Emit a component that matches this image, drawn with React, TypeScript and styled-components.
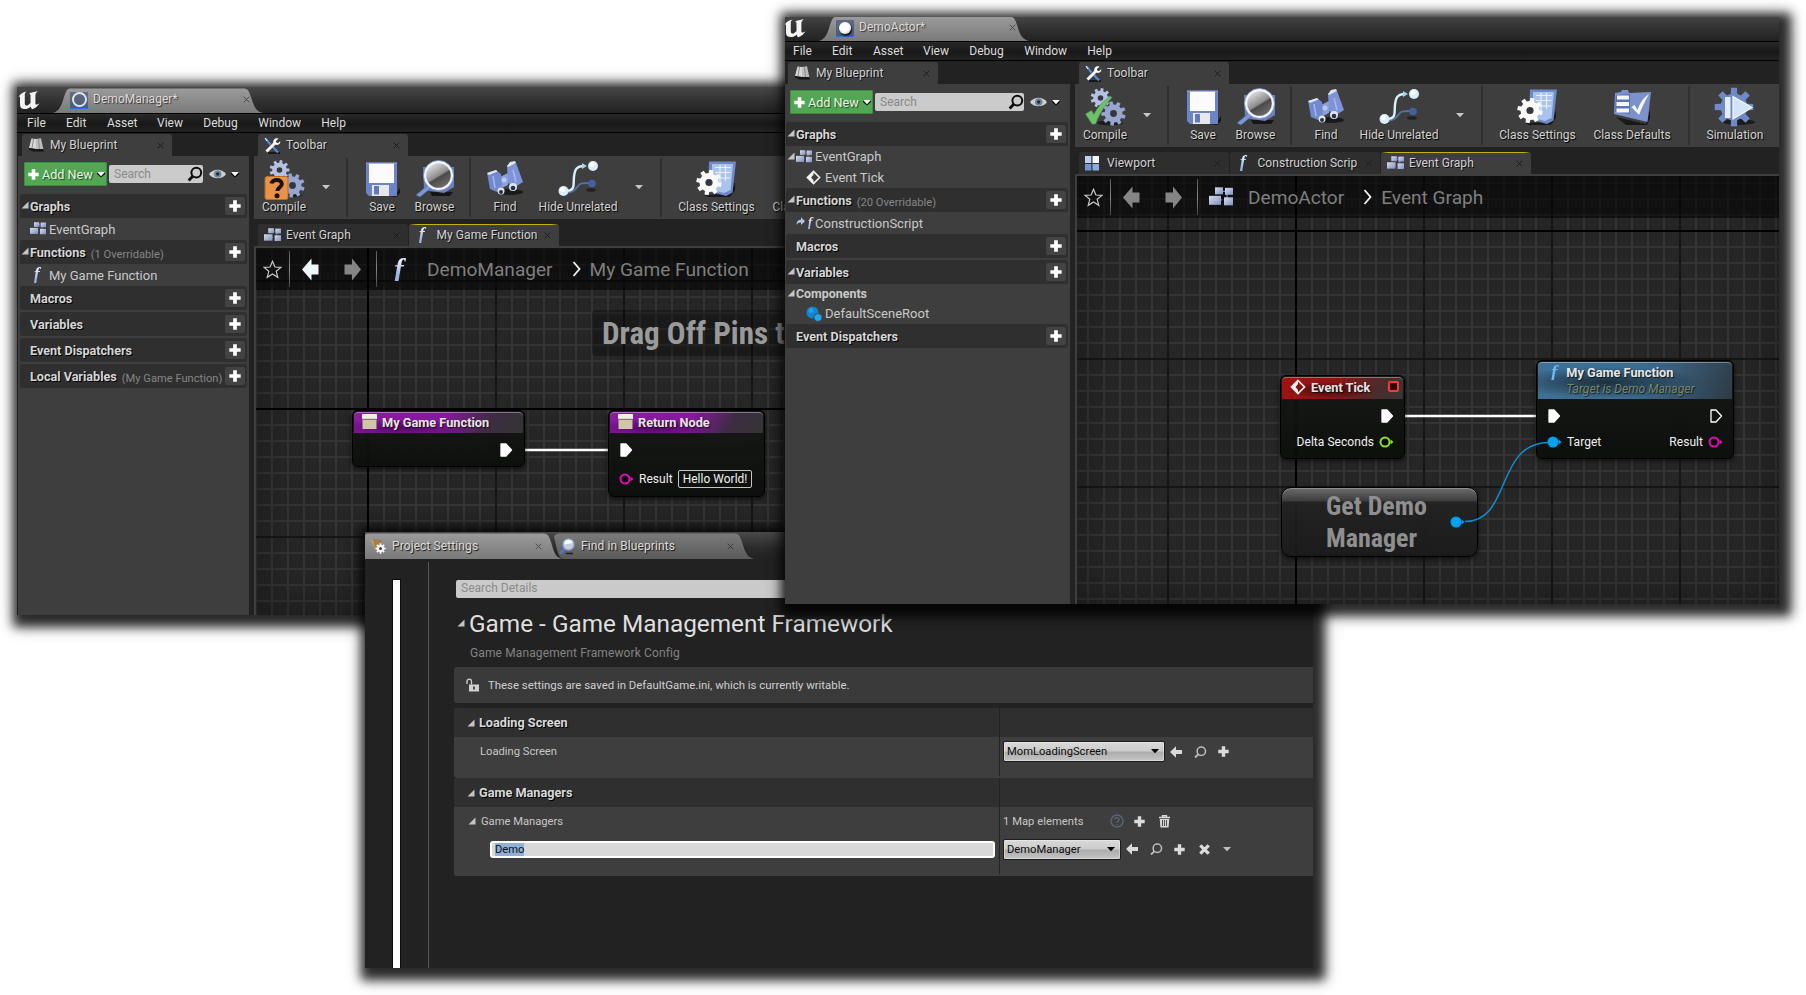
import React from 'react';
import styled, { createGlobalStyle, css } from 'styled-components';

const Global = createGlobalStyle`
  * { box-sizing: border-box; }
  html, body { margin: 0; padding: 0; background: #fff; }
  body { overflow: hidden; font-family: Roboto, sans-serif; font-size: 12px; color: #d2d2d2; }
  svg { display: block; flex: none; }
`;

/* ---------- desktop and windows ---------- */

const Desktop = styled.main`
  position: relative;
  width: 1806px;
  height: 995px;
  overflow: hidden;
  background: #fff;
`;

const Frame = styled.section<{ $x: number; $y: number; $w: number; $h: number }>`
  position: absolute;
  left: ${p => p.$x}px;
  top: ${p => p.$y}px;
  width: ${p => p.$w}px;
  height: ${p => p.$h}px;
  background: #222;
  box-shadow: 4px 4px 10px 8px rgba(0, 0, 0, 0.8), 4px 4px 18px 7px rgba(0, 0, 0, 0.2);
`;

const Clip = styled.div`
  width: 100%;
  height: 100%;
  overflow: hidden;
  display: flex;
`;

const Editor = styled.div<{ $inset: number }>`
  flex: 1;
  min-width: 0;
  display: flex;
  flex-direction: column;
  margin: ${p => -p.$inset}px 0 0 ${p => -p.$inset}px;
`;

const TitleBar = styled.header`
  height: 27px;
  flex: none;
  display: flex;
  align-items: flex-end;
  padding-left: 1px;
  border-bottom: 1px solid #000;
  background: linear-gradient(#484848, #343434 45%, #222);
`;

const Logo = styled.div`
  width: 35px;
  height: 26px;
  padding-top: 4px;
`;

const DocTab = styled.div`
  position: relative;
  width: 210px;
  height: 25px;
  display: flex;
  align-items: center;
  padding: 0 13px 3px 17px;
`;

const TabShape = styled.svg`
  position: absolute;
  inset: 0;
`;

const DocTitle = styled.span`
  position: relative;
  flex: 1;
  margin-left: 5px;
  color: #dcdcdc;
  letter-spacing: 0.05px;
  text-shadow: 1px 1px 1px #333;
`;

const DocIcon = styled.div`
  position: relative;
  width: 18px;
  height: 17px;
  margin-top: 2px;
  display: grid;
  place-items: center;
  background: linear-gradient(#5f6b83, #4d5b7b);
  border-bottom: 1px solid #2f6df0;
`;

const Ring = styled.i`
  width: 15px;
  height: 15px;
  border-radius: 50%;
  border: 2px solid #e3e3e3;
`;

const Ball = styled.i`
  width: 12px;
  height: 12px;
  border-radius: 50%;
  background: radial-gradient(circle at 45% 35%, #fff 45%, #bdbdbd);
  box-shadow: 1px 2px 2px #111;
`;

const MenuBar = styled.nav`
  height: 19px;
  flex: none;
  display: flex;
  align-items: center;
  padding: 0 0 1px 10px;
  border-bottom: 1px solid #000;
  background: linear-gradient(#292929, #181818 55%, #222);
`;

const MenuItem = styled.span<{ $w: number }>`
  width: ${p => p.$w}px;
  color: #dcdcdc;
`;

const Body = styled.div`
  flex: 1;
  min-height: 0;
  display: flex;
  gap: 5px;
  padding: 1px 0 0 1px;
  background: #222;
`;

const Side = styled.aside<{ $w: number }>`
  width: ${p => p.$w}px;
  flex: none;
  display: flex;
  flex-direction: column;
`;

const Main = styled.div`
  flex: 1;
  min-width: 0;
  display: flex;
  flex-direction: column;
`;

const TabStrip = styled.div`
  height: 22px;
  flex: none;
  display: flex;
  gap: 1px;
  padding-left: 4px;
`;

const PanelTab = styled.div<{ $on?: boolean; $mark?: boolean }>`
  position: relative;
  width: 150px;
  height: 22px;
  flex: none;
  display: flex;
  align-items: center;
  padding: 0 8px 0 6px;
  border-radius: 3px 3px 0 0;
  background: ${p => (p.$on ? '#3e3e3e' : '#2e2e2e')};
  ${p => p.$mark && css`
    background: linear-gradient(90deg, transparent, #c6b108 5% 95%, transparent) top / 100% 1px no-repeat, #3e3e3e;
  `}
`;

const TabText = styled.span<{ $pad?: number }>`
  flex: 1;
  white-space: nowrap;
  margin-left: ${p => p.$pad ?? 6}px;
  letter-spacing: 0.06px;
  text-shadow: 1px 1px 0 #111;
`;

/* ---------- my blueprint panel ---------- */

const SidePanel = styled.div`
  flex: 1;
  padding: 6px 2px 0;
  background: #3e3e3e;
`;

const Actions = styled.div`
  height: 24px;
  display: flex;
  align-items: center;
  padding: 0 4px;
  margin-bottom: 8px;
`;

const AddNew = styled.button`
  width: 83px;
  height: 24px;
  flex: none;
  display: flex;
  align-items: center;
  gap: 3px;
  padding: 0 0 0 3px;
  border: 1px solid #3b8f3d;
  border-radius: 1px;
  background: #51a753;
  font: 400 12.6px Roboto, sans-serif;
  color: #e9f3e9;
  text-shadow: 1px 1px 1px #1d4d1e;
  white-space: nowrap;
`;

const SearchBox = styled.div`
  flex: 1;
  height: 18px;
  margin-left: 2px;
  display: flex;
  align-items: center;
  justify-content: space-between;
  padding: 0 0 0 5px;
  border-radius: 2px;
  background: #cbcbcb;
  color: #8a8a8a;
`;

const ViewOptions = styled.div`
  width: 40px;
  flex: none;
  display: flex;
  align-items: center;
  gap: 4px;
  padding-left: 6px;
`;

const Category = styled.div<{ $open?: boolean }>`
  height: 24px;
  display: flex;
  align-items: center;
  margin-bottom: ${p => (p.$open ? 0 : 2)}px;
  padding-right: 2px;
  border-radius: ${p => (p.$open ? '3px 3px 0 0' : '3px')};
  background: #2f2f2f;
  font-weight: 700;
  font-size: 12.6px;
  color: #d6d6d6;
  text-shadow: 1px 1px 0 #000;
  white-space: nowrap;
`;

const Twist = styled.span<{ $w?: number }>`
  width: ${p => p.$w ?? 10}px;
  flex: none;
  padding: 0 0 2px 1px;
`;

const CategoryName = styled.span`
  flex: 1;
`;

const Note = styled.small`
  margin-left: 5px;
  font-weight: 400;
  font-size: 11.15px;
  color: #868686;
  position: relative;
  top: 1px;
  text-shadow: none;
`;

const AddButton = styled.span`
  width: 20px;
  height: 18px;
  flex: none;
  display: grid;
  place-items: center;
  border-radius: 2px;
  background: #434343;
`;

const Item = styled.div<{ $h?: number; $deep?: boolean; $bold?: boolean }>`
  height: ${p => p.$h ?? 22}px;
  display: flex;
  align-items: center;
  padding-left: ${p => (p.$deep ? 10 : 0)}px;
  font-size: 13px;
  color: #c9c9c9;
  ${p => p.$bold && css`font-weight: 700; font-size: 12.4px;`}
`;

const ItemIcon = styled.span`
  width: 19px;
  height: 16px;
  flex: none;
  display: flex;
  align-items: center;
`;

/* ---------- toolbar ---------- */

const Tools = styled.div`
  height: 63px;
  flex: none;
  display: flex;
  margin-bottom: 5px;
  background: #3e3e3e;
  overflow: hidden;
`;

const Tool = styled.div<{ $w: number }>`
  width: ${p => p.$w}px;
  flex: none;
  display: flex;
  flex-direction: column;
  align-items: center;
  padding-top: 2px;
  white-space: nowrap;
  text-shadow: 1px 1px 1px #000;
  line-height: 14px;
`;

const ToolIcon = styled.div`
  height: 42px;
`;

const DropCell = styled.div<{ $w: number }>`
  width: ${p => p.$w}px;
  flex: none;
  display: grid;
  place-items: center;
`;

const Separator = styled.i`
  width: 2px;
  flex: none;
  margin: 2px 8px;
  background: #2f2f2f;
`;

/* ---------- graph ---------- */

const GraphPanel = styled.div`
  flex: 1;
  min-height: 0;
  display: flex;
  border: solid #3e3e3e;
  border-width: 2px 0 0 2px;
`;

interface GridOrigin { $x: number; $y: number; $ax: number; $ay: number }

const Canvas = styled.div<GridOrigin>`
  position: relative;
  flex: 1;
  overflow: hidden;
  background-color: #262626;
  background-image:
    linear-gradient(#000, #000), linear-gradient(#000, #000),
    linear-gradient(90deg, #161616 2px, transparent 2px), linear-gradient(#161616 2px, transparent 2px),
    linear-gradient(90deg, #343434 2px, transparent 2px), linear-gradient(#343434 2px, transparent 2px);
  background-size: 2px 100%, 100% 2px, 128px 128px, 128px 128px, 16px 16px, 16px 16px;
  background-repeat: no-repeat, no-repeat, repeat, repeat, repeat, repeat;
  background-position:
    ${p => p.$ax}px 0, 0 ${p => p.$ay}px,
    ${p => p.$x}px 0, 0 ${p => p.$y}px, ${p => p.$x}px 0, 0 ${p => p.$y}px;
  box-shadow: inset 0 0 50px rgba(0, 0, 0, 0.35);
`;

const Crumbs = styled.div`
  height: 42px;
  display: flex;
  align-items: center;
  padding-left: 7px;
  background: rgba(0, 0, 0, 0.55);
  font-size: 19.1px;
  color: #7f7f7f;
  white-space: nowrap;
`;

const CrumbLine = styled.i<{ $l: number; $r: number }>`
  width: 1px;
  height: 36px;
  margin: 0 ${p => p.$r}px 0 ${p => p.$l}px;
  background: linear-gradient(#555, #8a8a8a, #444);
`;

const CrumbIcon = styled.span<{ $w: number; $r?: number }>`
  width: ${p => p.$w}px;
  margin-right: ${p => p.$r ?? 0}px;
  display: flex;
`;

const Hint = styled.div`
  position: absolute;
  left: 336px;
  top: 62px;
  width: 560px;
  height: 46px;
  padding-left: 10px;
  border-radius: 4px;
  background: rgba(0, 0, 0, 0.3);
  font: 700 31.1px/47px Roboto, sans-serif;
  font-stretch: 75%;
  color: #9a9a9a;
  white-space: nowrap;
`;

const Wires = styled.svg`
  position: absolute;
  inset: 0;
`;

const Node = styled.article<{ $x: number; $y: number; $w: number; $h: number }>`
  position: absolute;
  left: ${p => p.$x}px;
  top: ${p => p.$y}px;
  width: ${p => p.$w}px;
  height: ${p => p.$h}px;
  padding: 1px;
  border: 1px solid #000;
  border-radius: 6px;
  background: linear-gradient(rgba(22, 24, 22, 0.94), rgba(12, 14, 12, 0.94));
  box-shadow: 0 2px 5px rgba(0, 0, 0, 0.6);
  color: #f0f0f0;
`;

const tints = {
  purple: 'radial-gradient(ellipse at 28% 75%, #520863 0, transparent 42%), linear-gradient(115deg, #8a1ba3 0, #84199c 52%, #3d2c42 78%, #343434)',
  red: 'radial-gradient(ellipse at 40% 60%, #3d0d0d 0, transparent 45%), linear-gradient(115deg, #a01313 0, #8d1515 45%, #4f2a2a 75%, #363636)',
  blue: 'radial-gradient(ellipse at 35% 55%, #1d2f3b 0, transparent 55%), linear-gradient(115deg, #3f7198 0, #3b6c90 50%, #37546b 75%, #2d3a44)',
};

const NodeHead = styled.header<{ $tint: keyof typeof tints; $h: number; $pad: number }>`
  height: ${p => p.$h}px;
  display: flex;
  align-items: flex-start;
  padding: 2px 4px 0 ${p => p.$pad}px;
  border-radius: 4px 4px 0 0;
  box-shadow: inset 0 1px 0 rgba(255, 255, 255, 0.35);
  background: ${p => tints[p.$tint]};
`;

const NodeTitle = styled.div`
  flex: 1;
  padding-left: 5px;
  font: 700 12.75px/17px Roboto, sans-serif;
  color: #e6e6e6;
  text-shadow: 1px 1px 1px rgba(0, 0, 0, 0.7);
  white-space: nowrap;
`;

const NodeSub = styled.em`
  display: block;
  font-weight: 400;
  font-size: 12.1px;
  color: #76876f;
`;

const PinRow = styled.div<{ $top?: number; $h?: number; $l?: number; $r?: number }>`
  height: ${p => p.$h ?? 16}px;
  margin-top: ${p => p.$top ?? 0}px;
  padding: 0 ${p => p.$r ?? 0}px 0 ${p => p.$l ?? 0}px;
  display: flex;
  align-items: center;
  gap: 5px;
  letter-spacing: 0.05px;
  white-space: nowrap;
`;

const Spacer = styled.span`
  flex: 1;
`;

const PinValue = styled.span`
  width: 74px;
  height: 18px;
  padding-left: 4px;
  border: 1px solid #c5c5c5;
  border-radius: 2px;
  line-height: 16px;
  font-size: 11.9px;
`;

const StopMark = styled.i`
  width: 11px;
  height: 11px;
  margin-top: 2px;
  border: 2.5px solid #f43b3b;
  border-radius: 2px;
  background: #300;
`;

const CompactNode = styled.article`
  position: absolute;
  left: 204px;
  top: 311px;
  width: 197px;
  height: 70px;
  display: flex;
  align-items: center;
  justify-content: space-between;
  padding: 0 12px 0 44px;
  border: 1px solid #000;
  border-radius: 10px;
  background: linear-gradient(#6c6c6c, #3c3c3c 13px, rgba(34, 34, 34, 0.9) 14px, rgba(26, 26, 26, 0.9));
  box-shadow: 0 2px 5px rgba(0, 0, 0, 0.6), inset 0 1px 0 #8d8d8d;
  font: 700 26px/32px Roboto, sans-serif;
  font-stretch: 75%;
  color: #8f8f8f;
`;

/* ---------- settings window ---------- */

const SettingsBar = styled.header`
  height: 27px;
  flex: none;
  display: flex;
  padding-top: 1px;
  background: linear-gradient(#4a4a4a, #2a2a2a 60%, #222);
`;

const SettingsTab = styled.div<{ $w: number; $l: number; $r: number; $overlap?: number }>`
  position: relative;
  width: ${p => p.$w}px;
  height: 26px;
  margin-left: ${p => -(p.$overlap ?? 0)}px;
  display: flex;
  align-items: center;
  padding: 0 ${p => p.$r}px 0 ${p => p.$l}px;
`;

const SettingsTabText = styled.span`
  position: relative;
  flex: 1;
  margin-left: 6px;
  color: #dcdcdc;
  letter-spacing: 0.1px;
  text-shadow: 1px 1px 1px #111;
`;

const Above = styled.span`
  position: relative;
`;

const SettingsBody = styled.div`
  flex: 1;
  display: flex;
  background: #222;
`;

const NavColumn = styled.div`
  width: 64px;
  flex: none;
  margin-top: 3px;
  padding: 17px 0 0 27px;
  display: flex;
  border-right: 1px solid #575757;
`;

const ScrollThumb = styled.i`
  width: 9px;
  border: 1px solid #0c0c0c;
  border-bottom: 0;
  background: #fff;
`;

const Details = styled.div`
  flex: 1;
  padding: 21px 0 0 25px;
`;

const DetailsSearch = styled.div`
  height: 18px;
  margin-left: 2px;
  padding-left: 5px;
  border-radius: 2px 0 0 2px;
  background: #cacaca;
  color: #8a8a8a;
  line-height: 17px;
`;

const SectionTitle = styled.h1`
  height: 34px;
  margin: 8px 0 0 3px;
  display: flex;
  align-items: center;
  gap: 4px;
  font-weight: 400;
  font-size: 24.35px;
  color: #dfdfdf;
`;

const SectionSub = styled.p`
  height: 27px;
  margin: 0 0 0 16px;
  line-height: 26px;
  letter-spacing: 0.12px;
  color: #828282;
`;

const InfoBar = styled.div`
  height: 36px;
  margin-bottom: 5px;
  display: flex;
  align-items: center;
  gap: 9px;
  padding-left: 12px;
  border-radius: 3px 0 0 3px;
  background: #3a3a3a;
  font-size: 11.4px;
  color: #cfcfcf;
`;

const PropGroup = styled.section<{ $pad: number }>`
  padding-bottom: ${p => p.$pad}px;
  border-radius: 3px 0 0 3px;
  background: linear-gradient(#222, #222) 545px 0 / 1px calc(100% - 2px) no-repeat, #3e3e3e;
`;

const GroupHead = styled.h2`
  height: 29px;
  margin: 0;
  display: flex;
  align-items: center;
  gap: 4px;
  padding-left: 13px;
  border-radius: 3px 0 0 0;
  background: linear-gradient(#222, #222) 545px 0 / 1px 100% no-repeat, #2f2f2f;
  font-weight: 700;
  font-size: 12.7px;
  color: #d9d9d9;
  text-shadow: 1px 1px 0 #000;
`;

const PropRow = styled.div<{ $h: number }>`
  height: ${p => p.$h}px;
  display: grid;
  grid-template-columns: 549px 1fr;
  align-items: center;
  font-size: 11.2px;
  color: #c6c6c6;
`;

const PropName = styled.span<{ $l: number }>`
  display: flex;
  align-items: center;
  gap: 5px;
  padding-left: ${p => p.$l}px;
`;

const PropValue = styled.span`
  display: flex;
  align-items: center;
`;

const KeyInput = styled.span`
  width: 505px;
  height: 17px;
  margin-left: 36px;
  padding: 0 2px 0 3px;
  border: 2px solid #fff;
  border-radius: 3px;
  background: #d8d8d8;
  line-height: 13px;
  color: #111;
`;

const Selection = styled.mark`
  display: inline-block;
  height: 13px;
  background: #8fb0d8;
  color: #111;
`;

const Combo = styled.span<{ $w: number }>`
  width: ${p => p.$w}px;
  height: 21px;
  display: flex;
  align-items: center;
  justify-content: space-between;
  padding: 0 4px 0 3px;
  border: 1px solid #1c1c1c;
  border-radius: 2px;
  background: linear-gradient(#d9d9d9, #cccccc 45%, #adadad 55%, #c4c4c4);
  box-shadow: inset 0 0 0 1px rgba(255, 255, 255, 0.35);
  color: #0d0d0d;
`;

const IconSlot = styled.span<{ $l: number }>`
  width: 13px;
  margin-left: ${p => p.$l}px;
  display: grid;
  place-items: center;
`;

const Count = styled.span`
  width: 79px;
  white-space: nowrap;
  letter-spacing: 0.05px;
`;

/* ---------- glyphs ---------- */

const FGlyph = styled.b<{ $s: number; $c?: string }>`
  width: ${p => p.$s * 0.75}px;
  font: italic 700 ${p => p.$s}px/${p => p.$s * 0.85}px 'Liberation Serif', serif;
  color: transparent;
  text-align: center;
  background: ${p => p.$c ?? 'linear-gradient(#e4ebf7 15%, #9db3e6 75%)'};
  background-clip: text;
  -webkit-background-clip: text;
  text-shadow: none;
`;

const Plus = ({ s = 11, c = '#fff', t = 3.4 }: { s?: number; c?: string; t?: number }) => (
  <svg width={s} height={s} viewBox="0 0 11 11">
    <path d="M5.5 0.3V10.7M0.3 5.5H10.7" stroke={c} strokeWidth={t} />
  </svg>
);

const Caret = ({ c = '#fff', shade = true }: { c?: string; shade?: boolean }) => (
  <svg width="10" height="7" viewBox="0 0 10 7">
    {shade && <path d="M1 1h8v2L5 6.6 1 3z" fill="#000" />}
    <path d="M1 1h8L5 5.2z" fill={c} />
  </svg>
);

const Corner = ({ s = 8 }: { s?: number }) => (
  <svg width={s} height={s} viewBox="0 0 8 8"><path d="M7.5 0.5V7.5H0.5z" fill="#c4c4c4" /></svg>
);

const Close = ({ c = '#1c1c1c' }: { c?: string }) => (
  <Above>
    <svg width="7" height="7" viewBox="0 0 7 7"><path d="M.7.7l5.6 5.6M6.3.7L.7 6.3" stroke={c} strokeWidth="1" /></svg>
  </Above>
);

const Lens = () => (
  <svg width="16" height="16" viewBox="0 0 16 16" fill="none">
    <circle cx="9.3" cy="6.6" r="4.9" stroke="#0b0b0b" strokeWidth="2" />
    <path d="M5.8 10.2L1.6 14.4" stroke="#0b0b0b" strokeWidth="2.8" />
  </svg>
);

const Eye = () => (
  <svg width="17" height="12" viewBox="0 0 17 12">
    <path d="M0 6.3C3.500 0.300 13.500 0.300 17 6.300C13.500 11.600 3.500 11.600 0 6.300z" fill="#cfcfcf" />
    <circle cx="8.700" cy="6" r="3.800" fill="#6f87a3" />
    <circle cx="8.700" cy="6" r="1.700" fill="#1f2c3c" />
  </svg>
);

const UnrealMark = () => (
  <svg width="23" height="19" viewBox="0 0 23 19">
    <path
      d="M0.500 6C2 3.200 4.600 1.200 8.500 0.500C7.300 1.500 6.800 2.400 6.800 3.800V12.600C6.800 14.300 8.300 15 9.600 14.400C10.700 13.900 11.700 13.100 12.500 12.100V4.600C12.500 3.400 12 2.900 11.100 2.700C12.700 0.900 16.500 1.300 19.800 0C18.500 1.400 17.400 2.500 17.400 4.200V12.300C17.400 13.700 18.700 14.200 21.500 12.200C19.800 15.300 17.400 17 14.300 18.300C13.400 17.500 12.700 16.600 12.600 15.400C11 17.200 8.900 18.100 6.700 18.100C3.600 18.100 2 16.300 2 13.700V6.700C2 5 1.300 5.200 0.500 6z"
      fill="#f4f4f4"
    />
  </svg>
);

const BookIcon = () => (
  <svg width="17" height="16" viewBox="0 0 17 16">
    <path d="M3 13h12l1.500 1.500H5z" fill="#000" opacity=".7" />
    <path d="M3.500 1.500L8 2v10L1 11z" fill="#d7d7d7" />
    <path d="M8 2l5-.8L15.300 12H8z" fill="#bcbcbc" />
    <path d="M5.500 2L4 11M10.500 2l1 10" stroke="#8b8b8b" />
    <path d="M1 11l7 1h7v2H9l-1-.5L7 14l-6-1z" fill="#161616" />
  </svg>
);

const WrenchIcon = () => (
  <svg width="17" height="17" viewBox="0 0 17 17" fill="none">
    <path d="M4 16h12" stroke="#000" strokeWidth="2" opacity=".6" />
    <path d="M1.500 1.500l5 6M8 9l6 6.500" stroke="#4d8fe0" strokeWidth="2" />
    <path d="M1 1l2 3" stroke="#fff" strokeWidth="1" />
    <path d="M2.500 14.500L11 6" stroke="#f2f2f2" strokeWidth="3" />
    <path d="M14.500 1.500L11.800 4.200l.8 1.600 1.500.4L16.200 4c.6 2.300-1.600 4.600-4.200 3.800L9.400 5.900C8.800 3 11 .6 14.500 1.500z" fill="#fff" />
  </svg>
);

const GraphIcon = ({ w = 17 }: { w?: number }) => (
  <svg width={w} height={w * 0.82} viewBox="0 0 24 19">
    <defs>
      <linearGradient id="gi" x1="0" y1="0" x2="1" y2="1"><stop offset="0" stopColor="#d5dcf2" /><stop offset="1" stopColor="#8290bd" /></linearGradient>
    </defs>
    <path d="M8 4h8M18 6v8M13 13l-6-3" stroke="#7d88ab" strokeWidth="1.200" />
    <rect x="6" y="0" width="8" height="7" fill="url(#gi)" />
    <rect x="16" y="0.500" width="8" height="7" fill="url(#gi)" />
    <rect x="0" y="8.500" width="12" height="9" fill="url(#gi)" />
    <rect x="15" y="10" width="9" height="8" fill="url(#gi)" />
  </svg>
);

const ViewportIcon = () => (
  <svg width="14" height="15" viewBox="0 0 14 15">
    <rect x="0" y="0" width="6.300" height="7" fill="#b9d0f2" />
    <rect x="7.500" y="0" width="6.500" height="7" fill="#f4f8ff" />
    <rect x="0" y="8" width="6.300" height="6.500" fill="#7393d4" />
    <rect x="7.500" y="8" width="6.500" height="6.500" fill="#8faadf" />
  </svg>
);

const EventIcon = ({ s = 15 }: { s?: number }) => (
  <svg width={s} height={s} viewBox="0 0 16 16">
    <path d="M8 1.500L14.500 8 8 14.500 1.500 8z" fill="none" stroke="#f2f2f2" strokeWidth="1.700" />
    <path d="M8 1.500V5L5.500 8 8 11v3.500L1.500 8z" fill="#f2f2f2" />
  </svg>
);

const ConstructIcon = () => (
  <svg width="9" height="12" viewBox="0 0 9 12">
    <path d="M.5 8C.5 4 2.500 2.700 5 2.700V.3l4 4-4 3.700V5.500C3 5.300 1.500 6 .5 8z" fill="#b5c2e6" />
  </svg>
);

const SceneIcon = () => (
  <svg width="17" height="16" viewBox="0 0 17 16">
    <circle cx="6.500" cy="6.500" r="6" fill="#0d86d4" />
    <circle cx="5" cy="4.500" r="2.500" fill="#3aa5ea" opacity=".7" />
    <circle cx="12" cy="11.500" r="4" fill="#1fa8f5" stroke="#3e3e3e" strokeWidth="0.800" />
  </svg>
);

const gearPath = (cx: number, cy: number, r: number, inner: number, teeth: number, turn = 0) => {
  const pts: string[] = [];
  const step = (Math.PI * 2) / teeth;
  for (let i = 0; i < teeth; i++) {
    const a = i * step + turn;
    [[-0.3, inner], [-0.2, r], [0.2, r], [0.3, inner]].forEach(([o, rad]) => {
      pts.push(`${(cx + Math.cos(a + o * step) * rad).toFixed(2)} ${(cy + Math.sin(a + o * step) * rad).toFixed(2)}`);
    });
  }
  return `M${pts.join('L')}Z`;
};

const Gear = ({ cx, cy, r, inner, hole, teeth = 8, fill, turn = 0 }: {
  cx: number; cy: number; r: number; inner: number; hole: number; teeth?: number; fill: string; turn?: number;
}) => (
  <>
    <path d={gearPath(cx, cy, r, inner, teeth, turn)} fill={fill} />
    <circle cx={cx} cy={cy} r={hole} fill="#35373d" />
  </>
);

const CompileIcon = ({ ok }: { ok?: boolean }) => (
  <svg width="42" height="42" viewBox="0 0 42 42">
    <ellipse cx="26" cy="37" rx="13" ry="2.500" fill="#1d1d1d" />
    <Gear cx={16.500} cy={12} r={10} inner={7.300} hole={2.800} teeth={9} fill="#b4c0e4" />
    <Gear cx={29.500} cy={27.500} r={12.300} inner={9} hole={3.400} teeth={9} fill="#97a5d1" turn={0.3} />
    {ok ? (
      <path d="M1.500 28l6-3.500 2.500 4C14 20.500 19 14.500 26.500 10.500l1.500 1C22 18 15.500 27 11.500 38H8z" fill="#6fc06b" stroke="#4d9a50" strokeWidth="0.600" />
    ) : (
      <>
        <rect x="2" y="18.500" width="23" height="23" rx="2" fill="#e89347" stroke="#b96a25" />
        <path d="M8.500 25.500c.5-4.500 10-4.800 10.300.3.200 3.300-4.300 3.400-4.500 7.200" fill="none" stroke="#1c1208" strokeWidth="4" />
        <circle cx="14" cy="37.800" r="2.500" fill="#1c1208" />
      </>
    )}
  </svg>
);

const SaveIcon = () => (
  <svg width="38" height="42" viewBox="0 0 38 42">
    <path d="M9 36h24l4-6v5l-4 4z" fill="#151515" />
    <path d="M3 5h31v33H6l-3-3z" fill="#6b84c6" />
    <rect x="6" y="5.500" width="25" height="19.500" fill="#fbfbfb" />
    <rect x="9" y="27" width="17" height="11" fill="#e8e8ea" />
    <rect x="11" y="28" width="5" height="8.500" fill="#6278b8" />
    <path d="M3 5h31" stroke="#98aee6" />
  </svg>
);

const BrowseIcon = () => (
  <svg width="42" height="42" viewBox="0 0 42 42">
    <defs>
      <linearGradient id="bg1" x1="0.200" y1="0" x2="0.800" y2="1"><stop offset="0" stopColor="#f1f1f1" /><stop offset=".5" stopColor="#8c8c8c" /><stop offset=".56" stopColor="#4a4a4a" /><stop offset="1" stopColor="#777" /></linearGradient>
    </defs>
    <path d="M16 34h23l-3 4H18z" fill="#151515" />
    <path d="M9 9h31v20l-10 6-20-3z" fill="#6c82c0" />
    <path d="M2 37l12-10 3 3L6 39z" fill="#7d96d6" stroke="#4d62a0" strokeWidth="0.600" />
    <circle cx="24.500" cy="17.500" r="13.500" fill="url(#bg1)" stroke="#f2f6ff" strokeWidth="2.400" />
    <circle cx="24.500" cy="17.500" r="15" fill="none" stroke="#8fa5da" strokeWidth="0.800" />
  </svg>
);

const FindIcon = () => (
  <svg width="40" height="42" viewBox="0 0 40 42">
    <ellipse cx="25" cy="34" rx="13" ry="3" fill="#1a1a1a" />
    <path d="M15 19l8-4v12l-8 4z" fill="#8aa0d8" />
    <path d="M2 15l9-3 5 4 1 14-5 4-7-3z" fill="#7189cf" />
    <path d="M22 8l9-3 7 19-8 5-7-4z" fill="#7d94d8" />
    <path d="M2 15l9-3 1.500 1.500L4 17zM22 8l3-4 5-1 1 2-8 4z" fill="#e3e6ee" />
    <circle cx="16" cy="33" r="3.500" fill="#dfe5f4" /><circle cx="16" cy="34" r="2" fill="#26304a" />
    <circle cx="28" cy="29" r="4" fill="#dfe5f4" /><circle cx="28" cy="30" r="2.300" fill="#26304a" />
    <path d="M28 12l3 12M8 18l2 12" stroke="#a7baf0" strokeWidth="1.500" />
    <circle cx="19" cy="22" r="2.500" fill="#b9c8f2" />
  </svg>
);

const HideIcon = () => (
  <svg width="42" height="42" viewBox="0 0 42 42" fill="none">
    <ellipse cx="34" cy="32" rx="5" ry="1.800" fill="#222" />
    <path d="M8 35c8 0 10-3 13-7 2-3 5-3 11-3" stroke="#59709f" strokeWidth="1.800" />
    <circle cx="35" cy="25.500" r="3.800" fill="#455f9f" />
    <path d="M8 33c11 0 8-6 9-14 .7-8 3-11 10-11" stroke="#d8f2fc" strokeWidth="2.400" />
    <path d="M25 5l5 3-5 3z" fill="#9fd6f5" />
    <circle cx="36" cy="8" r="5" fill="#d9edfc" /><circle cx="35" cy="6.500" r="2.500" fill="#fff" />
    <circle cx="6.500" cy="33" r="5" fill="#d9edfc" /><circle cx="5.500" cy="31.500" r="2.500" fill="#fff" />
  </svg>
);

const SettingsIcon = () => (
  <svg width="42" height="42" viewBox="0 0 42 42">
    <path d="M8 37l26-1 5-12v8l-5 7H12z" fill="#191919" />
    <path d="M13 3.500h27l-3.500 31L30 38 12 33z" fill="#6f89c8" />
    <path d="M16 6h21l-2.500 26L28 35l-12-3z" fill="#a9c3ea" />
    <path d="M19 9.500h16M19 14.500h15.500M24 7v19M29.500 7v16M18.500 20H34" stroke="#e7f1ff" strokeWidth="1.200" />
    <Gear cx={13} cy={24.500} r={12.800} inner={9.500} hole={3.600} fill="#fafafa" turn={0.2} />
  </svg>
);

const DefaultsIcon = () => (
  <svg width="42" height="42" viewBox="0 0 42 42">
    <path d="M5 31l30 7 4-14v8l-3 7H15z" fill="#191919" />
    <path d="M4 7l6-1 1-2h6l1 3 22-1-3.500 30L3 28z" fill="#7b92cd" />
    <path d="M5 9l14-1v20L4 26z" fill="#5e74b3" />
    <path d="M6 9.500h12v4H6zM5.500 16h12.500v4H5.500zM5.500 22.500H18v4H5.500z" fill="#f5f5f5" />
    <path d="M20.500 21l3-2 3 5C29 17 32.500 11.500 38 8c-3.500 6-7 13-10 21z" fill="#f8f8f8" />
  </svg>
);

const SimulationIcon = () => (
  <svg width="44" height="42" viewBox="0 0 44 42">
    <ellipse cx="26" cy="36" rx="16" ry="3" fill="#1c1c1c" />
    <path d={gearPath(21, 21, 19.500, 13.500, 8, 0)} fill="#6f8ac9" />
    <path d="M12 11h5.500v21H12z" fill="#e4edf8" />
    <path d="M20 10.500L39 21.500 20 33z" fill="#d2e4f5" stroke="#f3f9ff" strokeWidth="1.200" />
  </svg>
);

const Star = () => (
  <svg width="19" height="19" viewBox="0 0 19 19">
    <path d="M9.500 1.300l2.400 5.700 6 .4-4.700 3.900 1.600 6-5.300-3.400-5.300 3.400 1.600-6L1.100 7.400l6-.4z" fill="none" stroke="#c9c9c9" strokeWidth="1.200" />
  </svg>
);

const NavArrow = ({ back, c }: { back?: boolean; c: string }) => (
  <svg width="17" height="23" viewBox="0 0 17 23">
    <path d={back ? 'M0 11.500L9.500 0.500V6.500H16.500V16.500H9.500V22.500z' : 'M17 11.500L8 0.500V6.500H0.500V16.500H8V22.500z'} fill={c} />
  </svg>
);

const Chevron = () => (
  <svg width="10" height="16" viewBox="0 0 10 16"><path d="M1.500 1l6 7-6 7" fill="none" stroke="#f2f2f2" strokeWidth="1.800" /></svg>
);

const EntryIcon = () => (
  <svg width="15" height="15" viewBox="0 0 15 15">
    <rect x="0" y="0" width="15" height="5" rx="0.500" fill="#f1eee4" />
    <rect x="0.500" y="5.500" width="14" height="9.500" rx="0.500" fill="#cfc6a8" />
    <path d="M0 5.300h15" stroke="#7d7768" />
  </svg>
);

const ExecPin = ({ hollow }: { hollow?: boolean }) => (
  <svg width="13" height="14" viewBox="0 0 13 14">
    <path d="M1 1h5l5.500 6L6 13H1z" fill={hollow ? 'none' : '#fff'} stroke="#fff" strokeWidth="1.300" strokeLinejoin="round" />
  </svg>
);

const DataPin = ({ c, filled }: { c: string; filled?: boolean }) => (
  <svg width="15" height="12" viewBox="0 0 15 12">
    <circle cx="6" cy="6" r="4.500" fill={filled ? c : '#0a0a0a'} stroke={c} strokeWidth="2" />
    <path d="M11.500 3.500L14.500 6l-3 2.500z" fill={c} />
  </svg>
);

const UseArrow = () => (
  <svg width="13" height="12" viewBox="0 0 13 12"><path d="M0 6l6-5.700V4h6v4H6v3.700z" fill="#dadada" /></svg>
);

const SmallLens = () => (
  <svg width="13" height="12" viewBox="0 0 13 12" fill="none">
    <circle cx="7.300" cy="5.300" r="4.200" stroke="#bdbdbd" strokeWidth="1.500" />
    <path d="M4.200 8.400L1 11.500" stroke="#bdbdbd" strokeWidth="2" />
  </svg>
);

const HelpIcon = () => (
  <svg width="14" height="14" viewBox="0 0 14 14" fill="none">
    <circle cx="7" cy="7" r="6" stroke="#5b6572" strokeWidth="1.400" />
    <path d="M4.800 5.500c.2-2.300 4.400-2.200 4.300.1 0 1.500-2 1.500-2.100 3M7 9.800v1.300" stroke="#5b6572" strokeWidth="1.400" />
  </svg>
);

const TrashIcon = () => (
  <svg width="11" height="13" viewBox="0 0 11 13">
    <path d="M0 2.500h11M3.500 2V.8h4V2" stroke="#d8d8d8" strokeWidth="1.400" fill="none" />
    <path d="M.8 4h9.400l-.6 8.500H1.400z" fill="#d8d8d8" />
    <path d="M3.500 5v6M5.500 5v6M7.500 5v6" stroke="#3e3e3e" strokeWidth="0.900" />
  </svg>
);

const CrossIcon = () => (
  <svg width="11" height="11" viewBox="0 0 11 11"><path d="M1.300 1.300l8.400 8.400M9.700 1.300L1.300 9.700" stroke="#dcdcdc" strokeWidth="3.200" /></svg>
);

const LockIcon = () => (
  <svg width="13" height="14" viewBox="0 0 13 14">
    <path d="M1 6V3.500C1 .2 5.500.2 5.500 3.500V6.500" fill="none" stroke="#d0d0d0" strokeWidth="1.300" />
    <rect x="3" y="6.500" width="10" height="7" fill="#d0d0d0" />
    <path d="M8 8.500v3" stroke="#222" strokeWidth="1.500" />
  </svg>
);

const ProjectIcon = () => (
  <svg width="16" height="16" viewBox="0 0 16 16">
    <path d="M1 2l9 1.500 1 8-6 1z" fill="#c4a06c" /><path d="M3 1l9 1-1 4-6 7z" fill="#a57f4b" />
    <path d={gearPath(10.500, 10.500, 5.200, 3.800, 8)} fill="#f5f5f5" /><circle cx="10.500" cy="10.500" r="1.500" fill="#444" />
  </svg>
);

const FindTabIcon = () => (
  <svg width="16" height="17" viewBox="0 0 16 17">
    <path d="M1 15.500l5-5" stroke="#5577c8" strokeWidth="2.600" />
    <circle cx="9.500" cy="6.500" r="5.500" fill="#c7cdda" stroke="#87a4de" strokeWidth="1.300" />
    <path d="M9.500 6.500m-4 0a4 4 0 0 1 8-1.500z" fill="#fff" />
    <path d="M7 15.500h7" stroke="#222" strokeWidth="1.500" />
  </svg>
);

/* ---------- composed parts ---------- */

const DocumentTab = ({ title, icon }: { title: string; icon: React.ReactNode }) => (
  <DocTab>
    <TabShape width="210" height="25" viewBox="0 0 210 25">
      <defs><linearGradient id="dt" x1="0" y1="0" x2="0" y2="1"><stop offset="0" stopColor="#9b9b9b" /><stop offset="1" stopColor="#7a7a7a" /></linearGradient></defs>
      <path d="M0 25C6 23 8 19 11 9C13 3 14 .5 18 .5H190C195 .5 196 3 198 9C201 19 203 23 210 25z" fill="url(#dt)" />
    </TabShape>
    <DocIcon>{icon}</DocIcon>
    <DocTitle>{title}</DocTitle>
    <Close c="#4c4c4c" />
  </DocTab>
);

const menus: [string, number][] = [['File', 39], ['Edit', 41], ['Asset', 50], ['View', 46.300], ['Debug', 55], ['Window', 63], ['Help', 40]];

const CategoryRow = ({ name, note, open, add = true }: { name: string; note?: string; open?: boolean; add?: boolean }) => (
  <Category $open={open && name !== 'Macros'}>
    <Twist>{open && <Corner />}</Twist>
    <CategoryName>{name}{note && <Note>{note}</Note>}</CategoryName>
    {add && <AddButton><Plus s={12} /></AddButton>}
  </Category>
);

const ToolBar = ({ ok }: { ok?: boolean }) => (
  <Tools>
    <Tool $w={60}><ToolIcon><CompileIcon ok={ok} /></ToolIcon>Compile</Tool>
    <DropCell $w={24}><Caret c="#c8c8c8" shade={false} /></DropCell>
    <Separator />
    <Tool $w={52}><ToolIcon><SaveIcon /></ToolIcon>Save</Tool>
    <Tool $w={53}><ToolIcon><BrowseIcon /></ToolIcon>Browse</Tool>
    <Separator />
    <Tool $w={52}><ToolIcon><FindIcon /></ToolIcon>Find</Tool>
    <Tool $w={94}><ToolIcon><HideIcon /></ToolIcon>Hide Unrelated</Tool>
    <DropCell $w={27}><Caret c="#c8c8c8" shade={false} /></DropCell>
    <Separator />
    <Tool $w={93}><ToolIcon><SettingsIcon /></ToolIcon>Class Settings</Tool>
    <Tool $w={96}><ToolIcon><DefaultsIcon /></ToolIcon>Class Defaults</Tool>
    <Separator />
    <Tool $w={74}><ToolIcon><SimulationIcon /></ToolIcon>Simulation</Tool>
  </Tools>
);

const BlueprintEditor = ({ inset, title, icon, side, tree, tabs, ok, children }: {
  inset: number; title: string; icon: React.ReactNode; side: number; tree: React.ReactNode;
  tabs: React.ReactNode; ok?: boolean; children: React.ReactNode;
}) => (
  <Clip>
    <Editor $inset={inset}>
      <TitleBar>
        <Logo><UnrealMark /></Logo>
        <DocumentTab title={title} icon={icon} />
      </TitleBar>
      <MenuBar>{menus.map(([m, w]) => <MenuItem key={m} $w={w}>{m}</MenuItem>)}</MenuBar>
      <Body>
        <Side $w={side}>
          <TabStrip>
            <PanelTab $on><BookIcon /><TabText $pad={5}>My Blueprint</TabText><Close /></PanelTab>
          </TabStrip>
          <SidePanel>
            <Actions>
              <AddNew><Plus s={11} t={3.6} />Add New<Caret /></AddNew>
              <SearchBox>Search<Lens /></SearchBox>
              <ViewOptions><Eye /><Caret /></ViewOptions>
            </Actions>
            {tree}
          </SidePanel>
        </Side>
        <Main>
          <TabStrip>
            <PanelTab $on><WrenchIcon /><TabText $pad={5}>Toolbar</TabText><Close /></PanelTab>
          </TabStrip>
          <ToolBar ok={ok} />
          <TabStrip>{tabs}</TabStrip>
          <GraphPanel>{children}</GraphPanel>
        </Main>
      </Body>
    </Editor>
  </Clip>
);

const CrumbBar = ({ icon, owner, page, canBack }: { icon: React.ReactNode; owner: string; page: string; canBack?: boolean }) => (
  <Crumbs>
    <CrumbIcon $w={19}><Star /></CrumbIcon>
    <CrumbLine $l={7} $r={12} />
    <CrumbIcon $w={17} $r={25}><NavArrow back c={canBack ? '#eef7f7' : '#858585'} /></CrumbIcon>
    <CrumbIcon $w={17}><NavArrow c="#858585" /></CrumbIcon>
    <CrumbLine $l={15} $r={11} />
    <CrumbIcon $w={39}>{icon}</CrumbIcon>
    {owner}
    <CrumbIcon $w={10} $r={9}>&nbsp;</CrumbIcon>
    <CrumbIcon $w={0}><Chevron /></CrumbIcon>
    <CrumbIcon $w={18}>&nbsp;</CrumbIcon>
    {page}
  </Crumbs>
);

const ManagerWindow = () => (
  <Frame $x={17} $y={87} $w={1000} $h={528}>
    <BlueprintEditor
      inset={0}
      title="DemoManager*"
      icon={<Ring />}
      side={231}
      tree={
        <>
          <CategoryRow name="Graphs" open />
          <Item><Twist /><ItemIcon><GraphIcon w={16} /></ItemIcon>EventGraph</Item>
          <CategoryRow name="Functions" note="(1 Overridable)" open />
          <Item><Twist /><ItemIcon><FGlyph $s={18}>f</FGlyph></ItemIcon>My Game Function</Item>
          <CategoryRow name="Macros" />
          <CategoryRow name="Variables" />
          <CategoryRow name="Event Dispatchers" />
          <CategoryRow name="Local Variables" note="(My Game Function)" />
        </>
      }
      tabs={
        <>
          <PanelTab><GraphIcon /><TabText $pad={5}>Event Graph</TabText><Close /></PanelTab>
          <PanelTab $on $mark><FGlyph $s={18}>f</FGlyph><TabText $pad={8}>My Game Function</TabText><Close /></PanelTab>
        </>
      }
    >
      <Canvas $x={111} $y={32} $ax={111} $ay={160}>
        <CrumbBar icon={<FGlyph $s={29}>f</FGlyph>} owner="DemoManager" page="My Game Function" canBack />
        <Hint>Drag Off Pins to</Hint>
        <Wires width="700" height="400">
          <path d="M269 202H352" stroke="#fff" strokeWidth="2.600" />
        </Wires>
        <Node $x={96} $y={162} $w={173} $h={57}>
          <NodeHead $tint="purple" $h={21} $pad={8}><EntryIcon /><NodeTitle>My Game Function</NodeTitle></NodeHead>
          <PinRow $top={9} $r={10}><Spacer /><ExecPin /></PinRow>
        </Node>
        <Node $x={352} $y={162} $w={157} $h={87}>
          <NodeHead $tint="purple" $h={21} $pad={8}><EntryIcon /><NodeTitle>Return Node</NodeTitle></NodeHead>
          <PinRow $top={9} $l={10}><ExecPin /></PinRow>
          <PinRow $top={12} $h={18} $l={9}><DataPin c="#e10db6" />Result<PinValue>Hello World!</PinValue></PinRow>
        </Node>
      </Canvas>
    </BlueprintEditor>
  </Frame>
);

const ActorWindow = () => (
  <Frame $x={785} $y={17} $w={994} $h={587}>
    <BlueprintEditor
      inset={2}
      title="DemoActor*"
      icon={<Ball />}
      side={286}
      ok
      tree={
        <>
          <CategoryRow name="Graphs" open />
          <Item $h={21}><Twist><Corner /></Twist><ItemIcon><GraphIcon w={16} /></ItemIcon>EventGraph</Item>
          <Item $h={21} $deep><Twist /><ItemIcon><EventIcon /></ItemIcon>Event Tick</Item>
          <CategoryRow name="Functions" note="(20 Overridable)" open />
          <Item><Twist /><ItemIcon><ConstructIcon /><FGlyph $s={14}>f</FGlyph></ItemIcon>ConstructionScript</Item>
          <CategoryRow name="Macros" />
          <CategoryRow name="Variables" open />
          <Item $h={19} $bold><Twist><Corner /></Twist>Components</Item>
          <Item $h={21} $deep><Twist /><ItemIcon><SceneIcon /></ItemIcon>DefaultSceneRoot</Item>
          <CategoryRow name="Event Dispatchers" />
        </>
      }
      tabs={
        <>
          <PanelTab><ViewportIcon /><TabText $pad={8}>Viewport</TabText><Close /></PanelTab>
          <PanelTab><FGlyph $s={18}>f</FGlyph><TabText $pad={8}>Construction Scrip</TabText><Close /></PanelTab>
          <PanelTab $on $mark><GraphIcon /><TabText $pad={5}>Event Graph</TabText><Close /></PanelTab>
        </>
      }
    >
      <Canvas $x={218} $y={54} $ax={218} $ay={54}>
        <CrumbBar icon={<GraphIcon w={24} />} owner="DemoActor" page="Event Graph" />
        <Wires width="702" height="428">
          <path d="M328 240H460" stroke="#fff" strokeWidth="2.600" />
        </Wires>
        <Node $x={203} $y={199} $w={125} $h={84}>
          <NodeHead $tint="red" $h={22} $pad={8}><EventIcon s={16} /><NodeTitle>Event Tick</NodeTitle><StopMark /></NodeHead>
          <PinRow $top={9} $r={9}><Spacer /><ExecPin /></PinRow>
          <PinRow $top={10} $r={9}><Spacer />Delta Seconds<DataPin c="#86e22f" /></PinRow>
        </Node>
        <Node $x={459} $y={184} $w={198} $h={99}>
          <NodeHead $tint="blue" $h={37} $pad={9}>
            <FGlyph $s={19} $c="#6fb9f5">f</FGlyph>
            <NodeTitle>My Game Function<NodeSub>Target is Demo Manager</NodeSub></NodeTitle>
          </NodeHead>
          <PinRow $top={9} $l={10} $r={9}><ExecPin /><Spacer /><ExecPin hollow /></PinRow>
          <PinRow $top={10} $l={9} $r={9}><DataPin c="#00a2f0" filled />Target<Spacer />Result<DataPin c="#e10db6" /></PinRow>
        </Node>
        <CompactNode>Get Demo<br />Manager<DataPin c="#00a2f0" filled /></CompactNode>
        <Wires width="702" height="428">
          <path d="M388 345.500C435 345.500 418 266.500 472 266.500" stroke="#0f8fd0" strokeWidth="1.500" fill="none" />
        </Wires>
      </Canvas>
    </BlueprintEditor>
  </Frame>
);

const SettingsWindow = () => (
  <Frame $x={365} $y={532} $w={948} $h={436}>
    <Clip>
      <Editor $inset={0}>
        <SettingsBar>
          <SettingsTab $w={197} $l={5} $r={20}>
            <TabShape width="197" height="26" viewBox="0 0 197 26">
              <path d="M0 26V3C0 1 1 .5 4 .5H178C183 .5 184 3 186 9C189 19 190 24 197 26z" fill="url(#dt)" />
            </TabShape>
            <Above><ProjectIcon /></Above><SettingsTabText>Project Settings</SettingsTabText><Close c="#4c4c4c" />
          </SettingsTab>
          <SettingsTab $w={200} $l={5} $r={20} $overlap={8}>
            <TabShape width="200" height="26" viewBox="0 0 200 26">
              <defs><linearGradient id="st" x1="0" y1="0" x2="0" y2="1"><stop offset="0" stopColor="#7b7b7b" /><stop offset="1" stopColor="#5a5a5a" /></linearGradient></defs>
              <path d="M0 4C1 1 3 .5 6 .5H180C185 .5 186 3 188 9C191 19 193 24 200 26H9C3 24 3 14 0 4z" fill="url(#st)" />
            </TabShape>
            <Above><FindTabIcon /></Above><SettingsTabText>Find in Blueprints</SettingsTabText><Close c="#3a3a3a" />
          </SettingsTab>
        </SettingsBar>
        <SettingsBody>
          <NavColumn><ScrollThumb /></NavColumn>
          <Details>
            <DetailsSearch>Search Details</DetailsSearch>
            <SectionTitle><Corner s={8} />Game - Game Management Framework</SectionTitle>
            <SectionSub>Game Management Framework Config</SectionSub>
            <InfoBar><LockIcon />These settings are saved in DefaultGame.ini, which is currently writable.</InfoBar>
            <PropGroup $pad={12}>
              <GroupHead><Corner />Loading Screen</GroupHead>
              <PropRow $h={29}>
                <PropName $l={26}>Loading Screen</PropName>
                <PropValue>
                  <Combo $w={162}>MomLoadingScreen<Caret c="#000" shade={false} /></Combo>
                  <IconSlot $l={5}><UseArrow /></IconSlot><IconSlot $l={11}><SmallLens /></IconSlot><IconSlot $l={10}><Plus c="#dcdcdc" /></IconSlot>
                </PropValue>
              </PropRow>
            </PropGroup>
            <PropGroup $pad={13}>
              <GroupHead><Corner />Game Managers</GroupHead>
              <PropRow $h={28}>
                <PropName $l={14}><Corner />Game Managers</PropName>
                <PropValue>
                  <Count>1 Map elements</Count>
                  <IconSlot $l={28}><HelpIcon /></IconSlot><IconSlot $l={10}><Plus c="#dcdcdc" /></IconSlot><IconSlot $l={12}><TrashIcon /></IconSlot>
                </PropValue>
              </PropRow>
              <PropRow $h={28}>
                <KeyInput><Selection>Demo</Selection></KeyInput>
                <PropValue>
                  <Combo $w={118}>DemoManager<Caret c="#000" shade={false} /></Combo>
                  <IconSlot $l={5}><UseArrow /></IconSlot><IconSlot $l={11}><SmallLens /></IconSlot><IconSlot $l={10}><Plus c="#dcdcdc" /></IconSlot>
                  <IconSlot $l={12}><CrossIcon /></IconSlot><IconSlot $l={9}><Caret c="#c0c0c0" shade={false} /></IconSlot>
                </PropValue>
              </PropRow>
            </PropGroup>
          </Details>
        </SettingsBody>
      </Editor>
    </Clip>
  </Frame>
);

export default function App() {
  return (
    <Desktop>
      <Global />
      <ManagerWindow />
      <SettingsWindow />
      <ActorWindow />
    </Desktop>
  );
}
